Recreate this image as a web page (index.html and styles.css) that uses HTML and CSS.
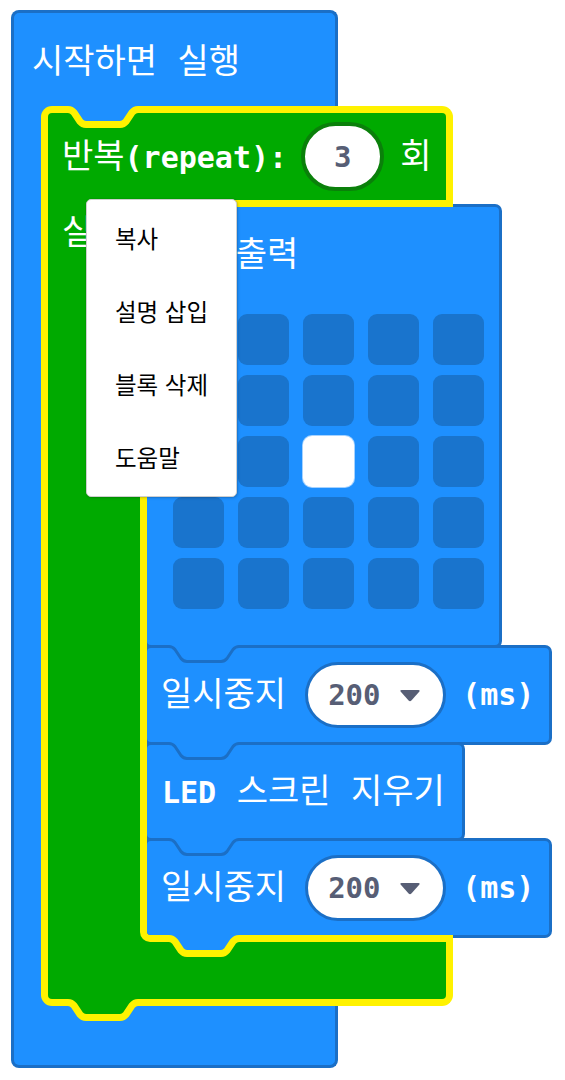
FILE: index.html
```html
<!DOCTYPE html>
<html lang="ko">
<head>
<meta charset="utf-8">
<title>Blocks</title>
<link rel="stylesheet" href="styles.css">
</head>
<body>
<div class="workspace">
  <div class="hat">
    <div class="hat-head"><span class="label"><span class="ko">시작하면 실행</span></span></div>
    <div class="hat-body">
      <div class="hat-arm"></div>
      <div class="hat-stmt">
        <div class="loop">
          <div class="loop-head">
            <svg class="notch notch-top" width="90" height="26" viewBox="0 0 90 26">
              <g transform="translate(10 3.5)">
                <path class="fill-blue" d="M0 0 Q3.5 0 6 3 L12 12 Q14.5 15 18 15 L52 15 Q55.5 15 58 12 L64 3 Q66.5 0 70 0 L70 -3.5 L0 -3.5 Z"/>
                <path class="stroke-yellow" d="M-10 0 L0 0 Q3.5 0 6 3 L12 12 Q14.5 15 18 15 L52 15 Q55.5 15 58 12 L64 3 Q66.5 0 70 0 L80 0"/>
              </g>
            </svg>
            <span class="label"><span class="ko">반복</span><span class="mono">(repeat):</span></span>
            <span class="pill pill-num">3</span>
            <span class="label times"><span class="ko">회</span></span>
          </div>
          <div class="loop-body">
            <div class="loop-arm"><span class="label"><span class="ko">실행</span></span></div>
            <div class="loop-stmt">
              <div class="block leds">
                <div class="block-title"><span class="mono">LED</span><span class="ko"> 출력</span></div>
                <div class="led-grid">
                  <span class="led"></span><span class="led"></span><span class="led"></span><span class="led"></span><span class="led"></span>
                  <span class="led"></span><span class="led"></span><span class="led"></span><span class="led"></span><span class="led"></span>
                  <span class="led"></span><span class="led"></span><span class="led on"></span><span class="led"></span><span class="led"></span>
                  <span class="led"></span><span class="led"></span><span class="led"></span><span class="led"></span><span class="led"></span>
                  <span class="led"></span><span class="led"></span><span class="led"></span><span class="led"></span><span class="led"></span>
                </div>
              </div>
              <div class="block pause">
                <svg class="notch junction" width="90" height="22" viewBox="0 0 90 22">
                  <g transform="translate(10 1.5)">
                    <path class="fill-blue" d="M0 0 Q3.5 0 6 3 L12 12 Q14.5 15 18 15 L52 15 Q55.5 15 58 12 L64 3 Q66.5 0 70 0 L70 -1.5 L0 -1.5 Z"/>
                    <path class="stroke-dark" d="M-10 0 L0 0 Q3.5 0 6 3 L12 12 Q14.5 15 18 15 L52 15 Q55.5 15 58 12 L64 3 Q66.5 0 70 0 L80 0"/>
                  </g>
                </svg>
                <span class="label"><span class="ko">일시중지</span></span>
                <span class="pill pill-drop"><span class="pill-value">200</span><svg class="caret" width="22" height="13" viewBox="0 0 22 13"><path d="M2.5 1 L19.5 1 Q21.5 1 20.2 2.7 L12.4 11.6 Q11 13 9.6 11.6 L1.8 2.7 Q0.5 1 2.5 1 Z"/></svg></span>
                <span class="label unit"><span class="mono">(ms)</span></span>
              </div>
              <div class="block clear">
                <svg class="notch junction" width="90" height="22" viewBox="0 0 90 22">
                  <g transform="translate(10 1.5)">
                    <path class="fill-blue" d="M0 0 Q3.5 0 6 3 L12 12 Q14.5 15 18 15 L52 15 Q55.5 15 58 12 L64 3 Q66.5 0 70 0 L70 -1.5 L0 -1.5 Z"/>
                    <path class="stroke-dark" d="M-10 0 L0 0 Q3.5 0 6 3 L12 12 Q14.5 15 18 15 L52 15 Q55.5 15 58 12 L64 3 Q66.5 0 70 0 L80 0"/>
                  </g>
                </svg>
                <span class="label"><span class="mono">LED</span><span class="ko"> 스크린 지우기</span></span>
              </div>
              <div class="block pause last">
                <svg class="notch junction" width="90" height="22" viewBox="0 0 90 22">
                  <g transform="translate(10 1.5)">
                    <path class="fill-blue" d="M0 0 Q3.5 0 6 3 L12 12 Q14.5 15 18 15 L52 15 Q55.5 15 58 12 L64 3 Q66.5 0 70 0 L70 -1.5 L0 -1.5 Z"/>
                    <path class="stroke-dark" d="M-10 0 L0 0 Q3.5 0 6 3 L12 12 Q14.5 15 18 15 L52 15 Q55.5 15 58 12 L64 3 Q66.5 0 70 0 L80 0"/>
                  </g>
                </svg>
                <span class="label"><span class="ko">일시중지</span></span>
                <span class="pill pill-drop"><span class="pill-value">200</span><svg class="caret" width="22" height="13" viewBox="0 0 22 13"><path d="M2.5 1 L19.5 1 Q21.5 1 20.2 2.7 L12.4 11.6 Q11 13 9.6 11.6 L1.8 2.7 Q0.5 1 2.5 1 Z"/></svg></span>
                <span class="label unit"><span class="mono">(ms)</span></span>
              </div>
              <svg class="notch stmt-end" width="90" height="26" viewBox="0 0 90 26">
                <g transform="translate(10 3.5)">
                  <path class="fill-blue" d="M0 0 Q3.5 0 6 3 L12 12 Q14.5 15 18 15 L52 15 Q55.5 15 58 12 L64 3 Q66.5 0 70 0 L70 -3.5 L0 -3.5 Z"/>
                  <path class="stroke-yellow" d="M-10 0 L0 0 Q3.5 0 6 3 L12 12 Q14.5 15 18 15 L52 15 Q55.5 15 58 12 L64 3 Q66.5 0 70 0 L80 0"/>
                </g>
              </svg>
            </div>
          </div>
          <div class="loop-foot">
            <svg class="notch foot-tab" width="90" height="26" viewBox="0 0 90 26">
              <g transform="translate(10 3.5)">
                <path class="fill-green" d="M0 0 Q3.5 0 6 3 L12 12 Q14.5 15 18 15 L52 15 Q55.5 15 58 12 L64 3 Q66.5 0 70 0 L70 -3.5 L0 -3.5 Z"/>
                <path class="stroke-yellow" d="M-10 0 L0 0 Q3.5 0 6 3 L12 12 Q14.5 15 18 15 L52 15 Q55.5 15 58 12 L64 3 Q66.5 0 70 0 L80 0"/>
              </g>
            </svg>
          </div>
        </div>
      </div>
    </div>
    <div class="hat-foot"></div>
  </div>
</div>

<div class="menu">
  <div class="menu-item">복사</div>
  <div class="menu-item">설명 삽입</div>
  <div class="menu-item">블록 삭제</div>
  <div class="menu-item">도움말</div>
</div>
</body>
</html>
```

FILE: styles.css
```css
:root {
  --blue: #1e90ff;
  --blue-dark: #1b6fc6;
  --led-off: #1974cd;
  --green: #00aa00;
  --green-dark: #0a800a;
  --yellow: #fff200;
  --value: #575e75;
}

html, body {
  margin: 0;
  padding: 0;
  background: #ffffff;
}

body {
  width: 565px;
  height: 1080px;
  overflow: hidden;
  position: relative;
  font-family: "DejaVu Sans Mono", "Noto Sans CJK KR", monospace;
  font-size: 30px;
  line-height: 36px;
  color: #ffffff;
}

.workspace {
  padding: 10px 0 0 11px;
}

/* ---------- text ---------- */
.label {
  white-space: nowrap;
  line-height: 36px;
}

.ko {
  font-family: "DejaVu Sans Mono", "Noto Sans CJK KR", sans-serif;
  font-weight: 400;
  font-size: 34px;
}

.mono {
  font-family: "DejaVu Sans Mono", monospace;
  font-weight: 700;
  font-size: 30px;
}

/* ---------- hat block (on start) ---------- */
.hat {
  width: 327px;
}

.hat-head {
  box-sizing: border-box;
  height: 96px;
  background: var(--blue);
  border: 3px solid var(--blue-dark);
  border-bottom: 0;
  border-radius: 8px 8px 0 0;
  display: flex;
  align-items: center;
  padding: 4px 0 0 18px;
}

.hat-body {
  display: flex;
}

.hat-arm {
  flex: none;
  box-sizing: border-box;
  width: 30px;
  background: var(--blue);
  border-left: 3px solid var(--blue-dark);
}

.hat-stmt {
  flex: 1;
  min-width: 0;
  background: var(--blue);
}

.hat-foot {
  box-sizing: border-box;
  height: 62px;
  background: var(--blue);
  border: 3px solid var(--blue-dark);
  border-top: 0;
  border-radius: 0 0 8px 8px;
}

/* ---------- loop block (repeat) ---------- */
.loop {
  width: 412px;
}

.loop-head {
  position: relative;
  box-sizing: border-box;
  height: 94px;
  background: var(--green);
  border: 7px solid var(--yellow);
  border-bottom: 0;
  border-radius: 11px 11px 0 0;
  display: flex;
  align-items: center;
  padding: 0 0 0 14px;
}

.loop-head .pill-num {
  margin-left: 14px;
}

.loop-head .times {
  margin-left: 16px;
}

.loop-body {
  display: flex;
  background: var(--green);
}

.loop-arm {
  flex: none;
  box-sizing: border-box;
  width: 99px;
  border-left: 7px solid var(--yellow);
  padding: 14px 0 0 14px;
}

.loop-stmt {
  position: relative;
  flex: none;
  box-sizing: border-box;
  width: 313px;
  padding: 7px 0 7px 7px;
}

.loop-stmt::after {
  content: "";
  position: absolute;
  inset: 0;
  border: 7px solid var(--yellow);
  border-right: 0;
  border-radius: 10px 0 0 10px;
  z-index: 3;
  pointer-events: none;
}

.loop-foot {
  position: relative;
  box-sizing: border-box;
  height: 64px;
  background: var(--green);
  border: 7px solid var(--yellow);
  border-top: 0;
  border-radius: 0 0 11px 11px;
}

/* ---------- notches ---------- */
.notch {
  position: absolute;
  display: block;
  overflow: visible;
}

.notch-top {
  top: -7px;
  left: 10px;
}

.foot-tab {
  top: 100%;
  left: 10px;
}

.stmt-end {
  bottom: -19px;
  left: 19px;
  z-index: 4;
}

.junction {
  top: -3px;
  left: 12px;
}

.fill-blue { fill: var(--blue); }
.fill-green { fill: var(--green); }
.stroke-yellow { fill: none; stroke: var(--yellow); stroke-width: 7; stroke-linejoin: round; }
.stroke-dark { fill: none; stroke: var(--blue-dark); stroke-width: 3; stroke-linejoin: round; }

/* ---------- statement blocks ---------- */
.block {
  position: relative;
  box-sizing: border-box;
  margin-left: -3px;
  background: var(--blue);
  border: 3px solid var(--blue-dark);
  border-radius: 7px;
}

.block + .block {
  margin-top: -3px;
}

.block.last {
  margin-bottom: -3px;
}

.leds {
  width: 358px;
  height: 444px;
  margin-top: -3px;
  padding: 29px 0 0 14px;
}

.block-title {
  height: 36px;
  white-space: nowrap;
}

.led-grid {
  display: grid;
  grid-template-columns: repeat(5, 51px);
  grid-auto-rows: 51px;
  column-gap: 14px;
  row-gap: 10px;
  margin: 42px 0 0 12px;
}

.led {
  display: block;
  background: var(--led-off);
  border-radius: 9px;
}

.led.on {
  background: #ffffff;
  box-shadow: 0 0 0 1px rgba(255, 255, 255, 0.6);
}

.pause {
  width: 408px;
  height: 100px;
  display: flex;
  align-items: center;
  padding-left: 14px;
}

.pause .pill-drop {
  margin-left: 19px;
}

.pause .unit {
  margin-left: 16px;
}

.clear {
  width: 321px;
  height: 99px;
  display: flex;
  align-items: center;
  padding-left: 15px;
}

/* ---------- value pills ---------- */
.pill {
  flex: none;
  box-sizing: border-box;
  display: flex;
  align-items: center;
  background: #ffffff;
  color: var(--value);
  font-family: "DejaVu Sans Mono", monospace;
  font-weight: 700;
  font-size: 29px;
  line-height: 36px;
}

.pill-num {
  width: 83px;
  height: 69px;
  border: 4px solid var(--green-dark);
  border-radius: 35px;
  justify-content: center;
}

.pill-drop {
  width: 141px;
  height: 66px;
  border: 3px solid var(--blue-dark);
  border-radius: 33px;
  padding-left: 20px;
}

.caret {
  display: block;
  margin-left: 18px;
  fill: var(--value);
}

/* ---------- context menu ---------- */
.menu {
  position: absolute;
  left: 86px;
  top: 199px;
  z-index: 10;
  box-sizing: border-box;
  width: 151px;
  padding: 2px 0;
  background: #ffffff;
  border: 1px solid #cfcfcf;
  border-radius: 5px;
  box-shadow: 0 0 0 1px rgba(0, 0, 0, 0.04), 1px 1px 3px rgba(0, 0, 0, 0.18);
  color: #000000;
  font-family: "Noto Sans CJK KR", sans-serif;
  font-size: 23.5px;
}

.menu-item {
  height: 73px;
  line-height: 73px;
  padding-left: 28px;
  white-space: nowrap;
}
```
